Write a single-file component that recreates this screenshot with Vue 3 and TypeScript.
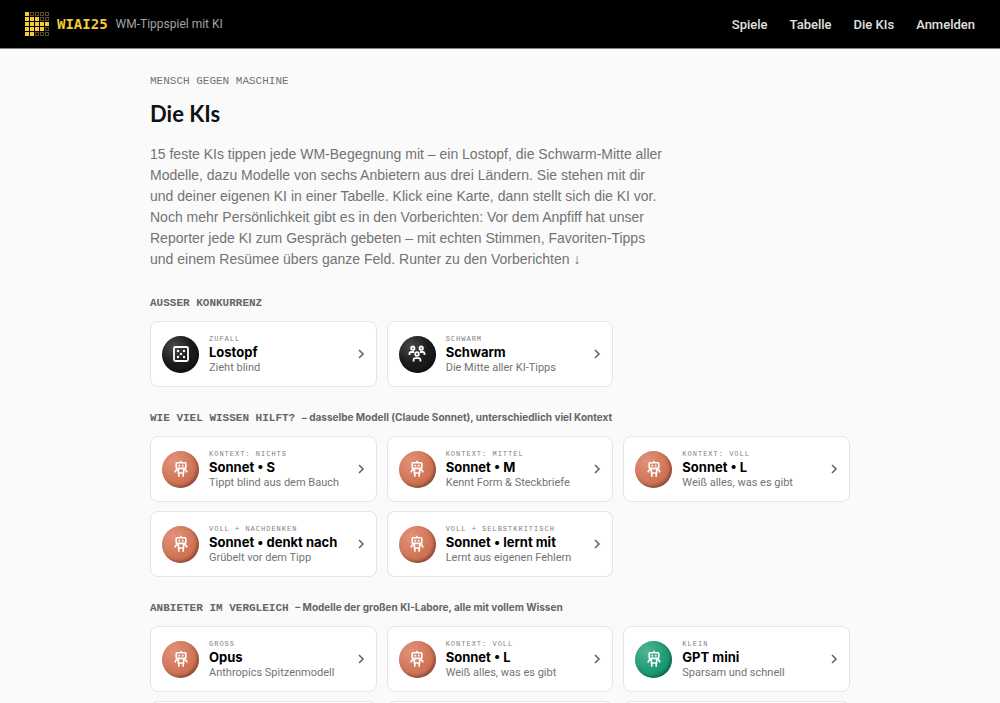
<script setup lang="ts">
type Kind = 'dice' | 'swarm' | 'bot'
type Tone = 'black' | 'clay' | 'green'

interface Ki {
  tag: string
  name: string
  text: string
  kind: Kind
  tone: Tone
}

interface Group {
  title: string
  note?: string
  kis: Ki[]
}

const nav: string[] = ['Spiele', 'Tabelle', 'Die KIs', 'Anmelden']

// Number of lit cells in each row of the logo
const logoRows: number[] = [1, 3, 5, 4, 2]

const bot = (tag: string, name: string, text: string, tone: Tone = 'clay'): Ki => ({
  tag, name, text, kind: 'bot', tone,
})

const groups: Group[] = [
  {
    title: 'Ausser Konkurrenz',
    kis: [
      { tag: 'Zufall', name: 'Lostopf', text: 'Zieht blind', kind: 'dice', tone: 'black' },
      { tag: 'Schwarm', name: 'Schwarm', text: 'Die Mitte aller KI-Tipps', kind: 'swarm', tone: 'black' },
    ],
  },
  {
    title: 'Wie viel Wissen hilft?',
    note: '– dasselbe Modell (Claude Sonnet), unterschiedlich viel Kontext',
    kis: [
      bot('Kontext: nichts', 'Sonnet • S', 'Tippt blind aus dem Bauch'),
      bot('Kontext: mittel', 'Sonnet • M', 'Kennt Form & Steckbriefe'),
      bot('Kontext: voll', 'Sonnet • L', 'Weiß alles, was es gibt'),
      bot('Voll + nachdenken', 'Sonnet • denkt nach', 'Grübelt vor dem Tipp'),
      bot('Voll + selbstkritisch', 'Sonnet • lernt mit', 'Lernt aus eigenen Fehlern'),
    ],
  },
  {
    title: 'Anbieter im Vergleich',
    note: '– Modelle der großen KI-Labore, alle mit vollem Wissen',
    kis: [
      bot('Gross', 'Opus', 'Anthropics Spitzenmodell'),
      bot('Kontext: voll', 'Sonnet • L', 'Weiß alles, was es gibt'),
      bot('Klein', 'GPT mini', 'Sparsam und schnell', 'green'),
      bot('Gross', 'GPT', 'OpenAIs Spitzenmodell', 'green'),
      bot('Klein', 'Haiku', 'Klein und flink'),
      bot('Klein', 'GPT nano', 'Noch sparsamer', 'green'),
    ],
  },
]
</script>

<template>
  <header class="bar">
    <a class="brand" href="#">
      <svg class="logo" width="25" height="25" viewBox="0 0 25 25" aria-hidden="true">
        <template v-for="(lit, r) in logoRows" :key="r">
          <template v-for="c in 5" :key="c">
            <rect v-if="c <= lit" :x="(c - 1) * 5" :y="r * 5" width="4" height="4" fill="#f5cb3c" />
            <rect v-else :x="(c - 1) * 5 + 0.5" :y="r * 5 + 0.5" width="3" height="3" fill="none" stroke="#5c4d1c" />
          </template>
        </template>
      </svg>
      <span class="brand-name">WIAI25</span>
      <span class="claim">WM-Tippspiel mit KI</span>
    </a>
    <nav class="nav">
      <a v-for="item in nav" :key="item" href="#">{{ item }}</a>
    </nav>
  </header>

  <main class="page">
    <p class="eyebrow">Mensch gegen Maschine</p>
    <h1>Die KIs</h1>
    <p class="intro">
      15 feste KIs tippen jede WM-Begegnung mit – ein Lostopf, die Schwarm-Mitte aller<br />
      Modelle, dazu Modelle von sechs Anbietern aus drei Ländern. Sie stehen mit dir<br />
      und deiner eigenen KI in einer Tabelle. Klick eine Karte, dann stellt sich die KI vor.<br />
      Noch mehr Persönlichkeit gibt es in den Vorberichten: Vor dem Anpfiff hat unser<br />
      Reporter jede KI zum Gespräch gebeten – mit echten Stimmen, Favoriten-Tipps<br />
      und einem Resümee übers ganze Feld. <a href="#vorberichte">Runter zu den Vorberichten ↓</a>
    </p>

    <section v-for="group in groups" :key="group.title" class="group">
      <h2>{{ group.title }} <span v-if="group.note" class="note">{{ group.note }}</span></h2>
      <div class="grid">
        <button v-for="ki in group.kis" :key="ki.name" type="button" class="card">
          <span class="avatar" :class="ki.tone">
            <svg v-if="ki.kind === 'dice'" width="18" height="18" viewBox="0 0 18 18" aria-hidden="true">
              <rect x="2" y="2" width="14" height="14" rx="1.5" fill="none" stroke="#fff" stroke-width="1.8" />
              <g fill="#fff">
                <circle cx="6" cy="6" r="1.2" />
                <circle cx="12" cy="6" r="1.2" />
                <circle cx="9" cy="9" r="1.2" />
                <circle cx="6" cy="12" r="1.2" />
                <circle cx="12" cy="12" r="1.2" />
              </g>
            </svg>
            <svg v-else-if="ki.kind === 'swarm'" width="18" height="18" viewBox="0 0 18 18" aria-hidden="true">
              <g fill="none" stroke="#fff" stroke-width="1.8">
                <circle cx="4.8" cy="3.2" r="1.7" />
                <circle cx="13.2" cy="3.2" r="1.7" />
                <circle cx="9" cy="9" r="1.8" />
                <path d="M1.5 10V8.6Q1.5 7 3.2 7H6M16.5 10V8.6Q16.5 7 14.8 7H12M5.6 16.5V15Q5.6 13.2 7.4 13.2H10.6Q12.4 13.2 12.4 15V16.5" />
              </g>
            </svg>
            <svg v-else width="18" height="18" viewBox="0 0 18 18" aria-hidden="true">
              <g fill="none" stroke="#fff" stroke-width="1.6">
                <path d="M9 0.8V2.8" />
                <rect x="4.2" y="2.8" width="9.6" height="5.6" rx="0.8" />
                <path d="M6.4 8.6V13H11.6V8.6M6.4 10H4.2L2.8 12.4M11.6 10H13.8L15.2 12.4M6.8 13V16.8M11.2 13V16.8" />
              </g>
              <rect x="6.4" y="4.8" width="1.7" height="1.7" fill="#fff" />
              <rect x="9.9" y="4.8" width="1.7" height="1.7" fill="#fff" />
            </svg>
          </span>
          <span class="info">
            <span class="tag">{{ ki.tag }}</span>
            <span class="name">{{ ki.name }}</span>
            <span class="text">{{ ki.text }}</span>
          </span>
          <svg class="chevron" width="8" height="10" viewBox="0 0 8 10" aria-hidden="true">
            <path d="M2 1L6 5L2 9" fill="none" stroke="#666" stroke-width="1.6" />
          </svg>
        </button>
      </div>
    </section>
  </main>
</template>

<style>
body {
  margin: 0;
  background: #fafafa;
}
</style>

<style scoped>
.bar,
.page,
.card {
  font-family: Roboto, "Liberation Sans", sans-serif;
}

.bar {
  display: flex;
  align-items: center;
  justify-content: space-between;
  height: 48px;
  padding: 0 25px;
  background: #000;
  border-bottom: 1px solid #858585;
}

.brand {
  display: flex;
  align-items: center;
  text-decoration: none;
}

.brand-name {
  margin-left: 7px;
  color: #f5cb3c;
  font: 700 14px/20px "DejaVu Sans Mono", monospace;
}

.claim {
  margin-left: 8px;
  color: #a3a3a3;
  font-size: 12px;
}

.nav {
  display: flex;
  gap: 22px;
}

.nav a {
  color: #e0e0e0;
  font-size: 13px;
  font-weight: 500;
  text-decoration: none;
}

.page {
  max-width: 700px;
  margin: 0 auto;
  padding: 25px 20px 40px;
}

.eyebrow {
  margin: 0;
  color: #737373;
  font: 400 11px/14px "Liberation Mono", monospace;
  text-transform: uppercase;
}

h1 {
  margin: 12px 0 16px;
  color: #111;
  font: 700 22px/28px Lato, sans-serif;
}

.intro {
  margin: 0 0 26px;
  color: #737373;
  font-family: "Liberation Sans", Arial, sans-serif;
  font-size: 14px;
  line-height: 21px;
}

.intro a {
  color: inherit;
  text-decoration: none;
}

.group {
  margin-top: 24px;
}

h2 {
  margin: 0 0 11px;
  color: #666;
  font: 700 11px/14px "Liberation Mono", monospace;
  text-transform: uppercase;
}

.note {
  font-family: Inter, sans-serif;
  font-size: 10px;
  line-height: 10px;
  text-transform: none;
}

.grid {
  display: grid;
  grid-template-columns: repeat(3, minmax(0, 1fr));
  gap: 9px 10px;
}

.card {
  display: flex;
  align-items: center;
  gap: 10px;
  padding: 11px;
  border: 1px solid #e5e5e5;
  border-radius: 8px;
  background: #fff;
  text-align: left;
  cursor: pointer;
}

.avatar {
  display: flex;
  flex: none;
  align-items: center;
  justify-content: center;
  width: 37px;
  height: 37px;
  border-radius: 50%;
  box-shadow: inset -2px -2px 3px rgba(0, 0, 0, 0.3);
}

.black {
  background: radial-gradient(circle at 32% 28%, #4a4a4a, #1c1c1c 45%, #111);
}

.clay {
  background: radial-gradient(circle at 32% 28%, #e0927a, #d07254 60%, #c56a4c);
}

.green {
  background: radial-gradient(circle at 32% 28%, #4fb593, #1d9a74 55%, #14926b);
}

.info {
  display: flex;
  flex: 1;
  flex-direction: column;
  min-width: 0;
  padding-top: 1px;
  white-space: nowrap;
}

.tag {
  color: #808080;
  font: 400 7px/10px "Liberation Mono", monospace;
  letter-spacing: 1px;
  text-transform: uppercase;
}

.name {
  color: #000;
  font-family: Inter, sans-serif;
  font-size: 13px;
  font-weight: 700;
  line-height: 16px;
}

.text {
  color: #737373;
  font-size: 11px;
  line-height: 15px;
}

.chevron {
  flex: none;
}
</style>
